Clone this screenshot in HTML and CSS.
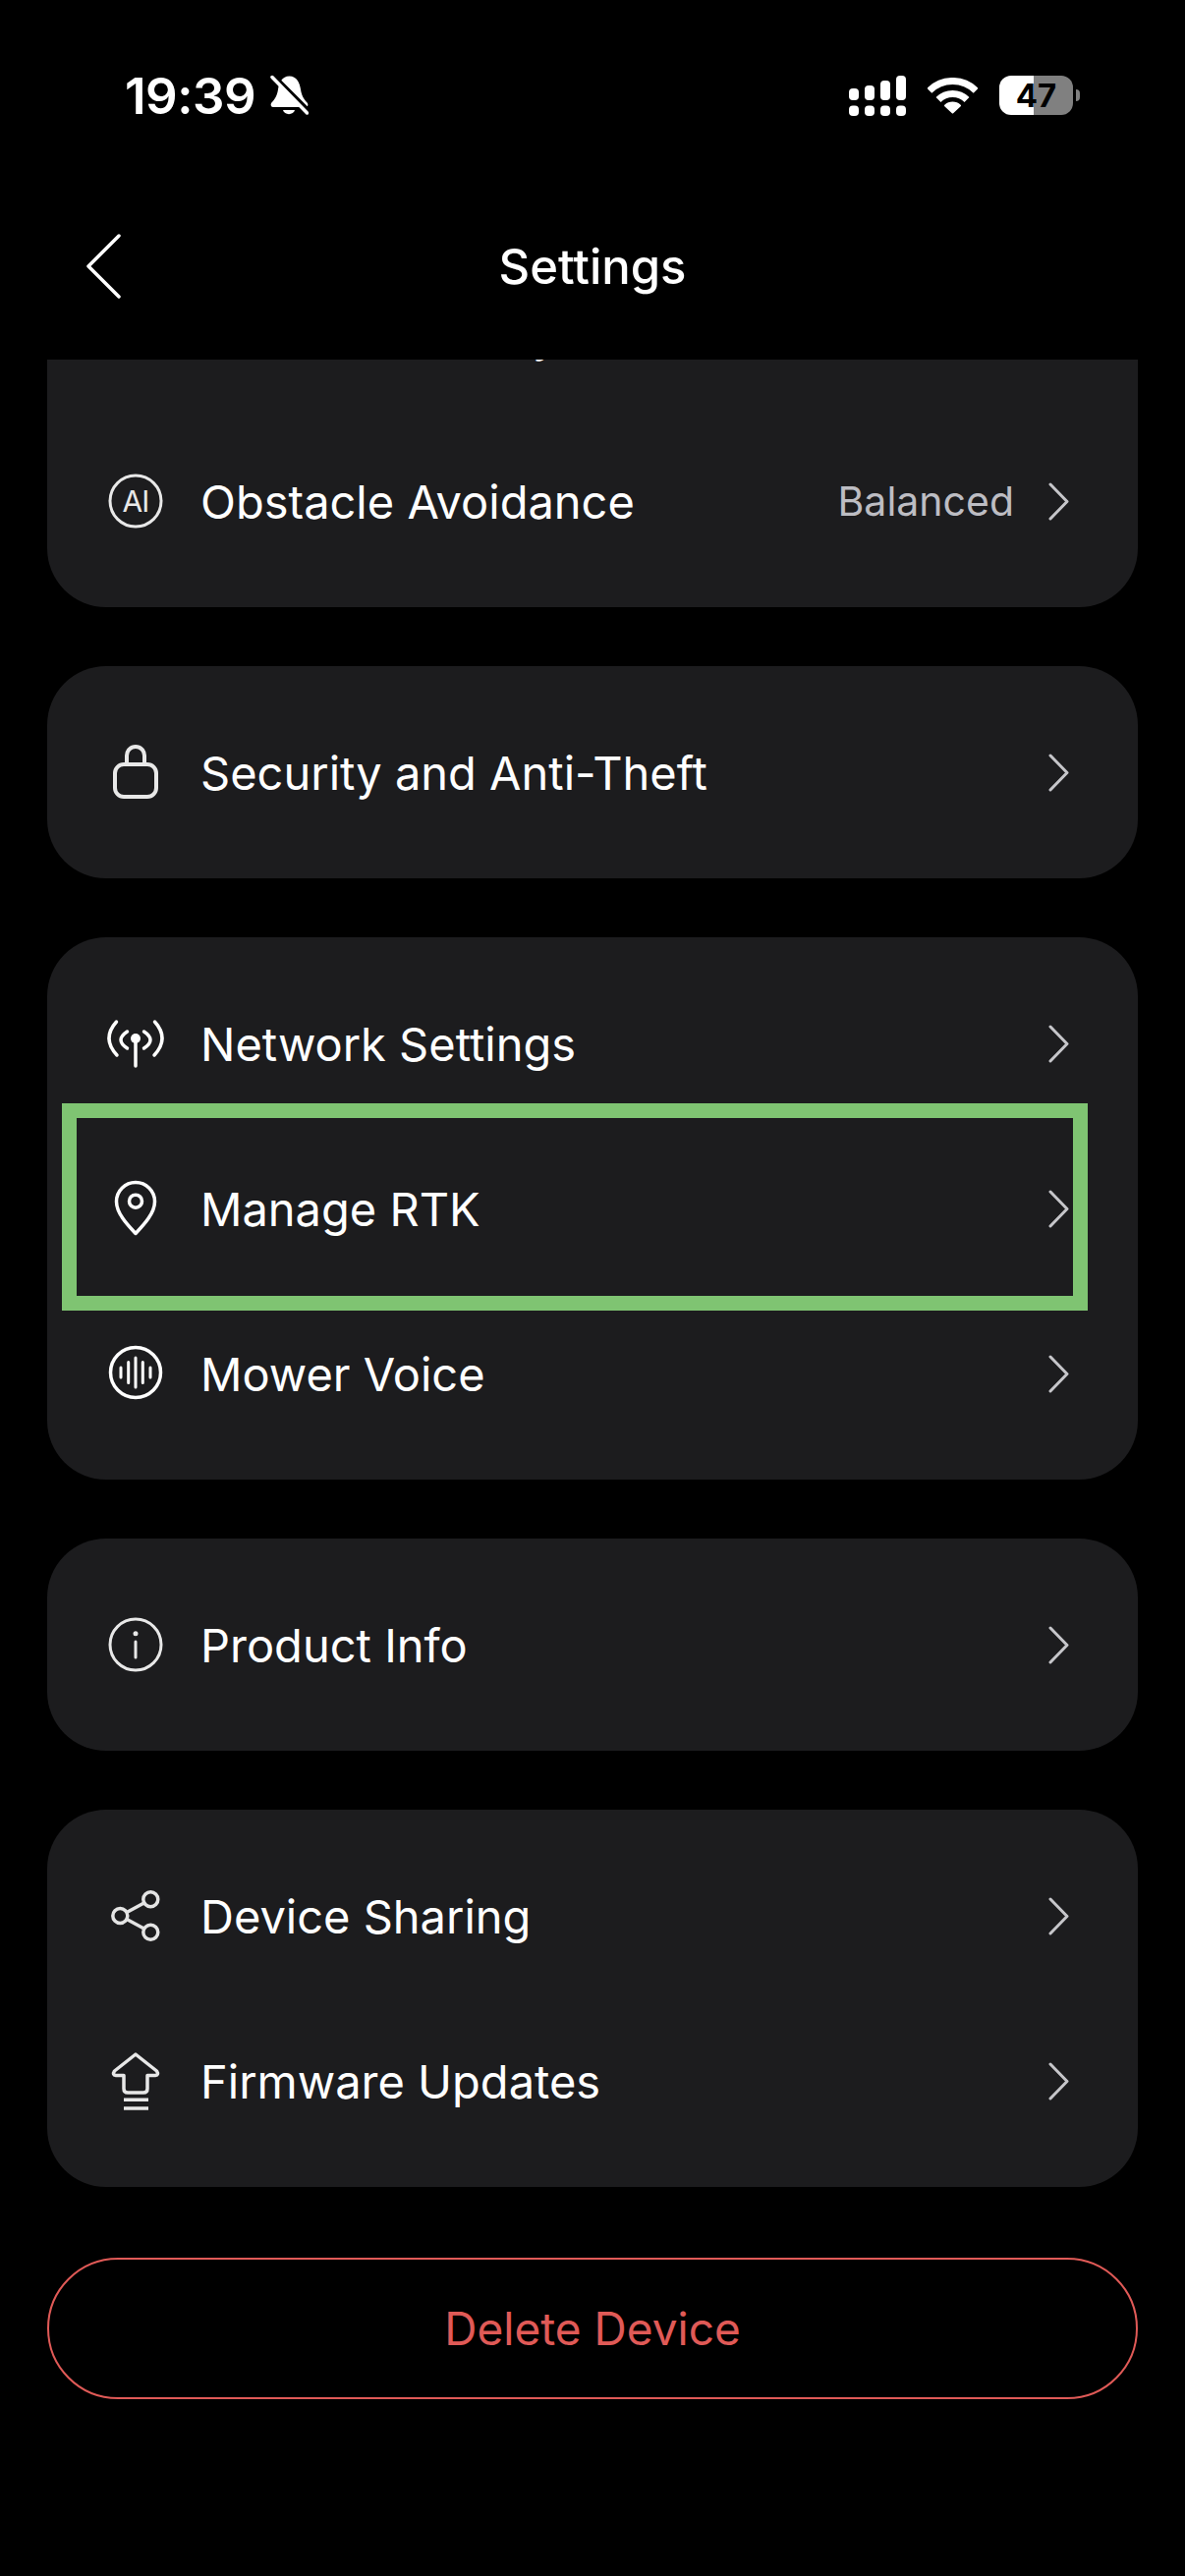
FILE: index.html
```html
<!DOCTYPE html>
<html lang="en">
<head>
    <meta charset="UTF-8">
    <meta name="viewport" content="width=device-width, initial-scale=1.0">
    <title>Settings</title>
    <link rel="stylesheet" href="styles.css">
</head>
<body>
    <!-- Status bar -->
    <div class="status-bar">
        <div class="status-left">
            <span class="time">19:39</span>
            <svg class="bell" width="39" height="43" viewBox="0 0 39 43">
                <path d="M19.5 1.5C27 1.5 30 8 31 15C32 22 35 26 38 29C39 31 38 33 36 33H3C1 33 0 31 1 29C4 26 7 22 8 15C9 8 12 1.500 19.500 1.500Z" fill="#fff"/>
                <path d="M13 36H25C24 41.500 14 41.500 13 36Z" fill="#fff"/>
                <path d="M-1 -3L39 37" stroke="#000" stroke-width="5" fill="none"/>
                <path d="M2 2.500L37.500 39" stroke="#fff" stroke-width="3.500" stroke-linecap="round" fill="none"/>
            </svg>
        </div>
        <div class="status-right">
            <svg width="58" height="41" viewBox="0 0 58 41" fill="#fff">
                <rect x="0" y="13" width="10" height="12" rx="4"/>
                <rect x="16" y="10" width="10" height="15" rx="4"/>
                <rect x="32" y="5" width="10" height="20" rx="4"/>
                <rect x="48" y="0" width="10" height="25" rx="4"/>
                <rect x="0" y="30.500" width="10" height="10.500" rx="4"/>
                <rect x="16" y="30.500" width="10" height="10.500" rx="4"/>
                <rect x="32" y="30.500" width="10" height="10.500" rx="4"/>
                <rect x="48" y="30.500" width="10" height="10.500" rx="4"/>
            </svg>
            <svg width="51" height="37" viewBox="0 0 51 37" fill="none" stroke="#fff">
                <path d="M1.800 13.300A33.500 33.500 0 0 1 49.200 13.300" stroke-width="7"/>
                <path d="M11 22.500A20.500 20.500 0 0 1 40 22.500" stroke-width="7"/>
                <path d="M25.500 35.500L18 28.500A11 11 0 0 1 33 28.500Z" fill="#fff" stroke-width="2" stroke-linejoin="round"/>
            </svg>
            <div class="battery">
                <span class="battery-level">47</span>
                <span class="battery-nub"></span>
            </div>
        </div>
    </div>

    <!-- Header -->
    <header class="top-bar">
        <svg class="back" width="35" height="66" viewBox="0 0 35 66" fill="none" stroke="#fff" stroke-width="3.500" stroke-linecap="round" stroke-linejoin="round">
            <path d="M33 2L2 33L33 64"/>
        </svg>
        <h1>Settings</h1>
    </header>

    <main class="settings">
        <section class="card card-scrolled">
            <!-- row scrolled away under the header, only the tail of its last letter shows -->
            <div class="row">
                <span class="row-icon"></span>
                <span class="row-label row-label-scrolled">y</span>
            </div>
            <div class="row">
                <svg class="row-icon" viewBox="0 0 60 60" fill="none" stroke="#e8e8e8" stroke-width="3">
                    <circle cx="30" cy="30" r="26"/>
                    <text x="30" y="41" class="ai-text" text-anchor="middle">AI</text>
                </svg>
                <span class="row-label">Obstacle Avoidance</span>
                <span class="row-value">Balanced</span>
                <svg class="chevron" viewBox="0 0 21 39"><path d="M2 2L19 19.500L2 37"/></svg>
            </div>
        </section>

        <section class="card">
            <div class="row">
                <svg class="row-icon" viewBox="0 0 60 60" fill="none" stroke="#e8e8e8" stroke-width="4">
                    <rect x="9" y="22" width="42" height="33" rx="9"/>
                    <path d="M21 21V13a9 9 0 0 1 18 0V21"/>
                </svg>
                <span class="row-label">Security and Anti-Theft</span>
                <svg class="chevron" viewBox="0 0 21 39"><path d="M2 2L19 19.500L2 37"/></svg>
            </div>
        </section>

        <section class="card card-highlighted">
            <div class="row">
                <svg class="row-icon" viewBox="0 0 60 60" fill="none" stroke="#fff" stroke-width="3.500" stroke-linecap="round">
                    <path d="M10.500 8Q-4.800 25 11 42"/>
                    <path d="M21.500 18Q8.500 26.500 21.500 35"/>
                    <path d="M49.500 8Q64.800 25 49 42"/>
                    <path d="M38.500 18Q51.500 26.500 38.500 35"/>
                    <circle cx="30" cy="25" r="5" fill="#fff" stroke="none"/>
                    <path d="M30 26V53"/>
                </svg>
                <span class="row-label">Network Settings</span>
                <svg class="chevron" viewBox="0 0 21 39"><path d="M2 2L19 19.500L2 37"/></svg>
            </div>
            <div class="row">
                <svg class="row-icon" viewBox="0 0 60 60" fill="none" stroke="#fff" stroke-width="3.500" stroke-linejoin="round">
                    <path d="M30 55.500C24 49 10.500 36 10.500 23A19.500 19.500 0 0 1 49.500 23C49.500 36 36 49 30 55.500Z"/>
                    <circle cx="30" cy="22.700" r="6.500"/>
                </svg>
                <span class="row-label">Manage RTK</span>
                <svg class="chevron" viewBox="0 0 21 39"><path d="M2 2L19 19.500L2 37"/></svg>
            </div>
            <div class="row">
                <svg class="row-icon" viewBox="0 0 60 60" fill="none" stroke="#fff" stroke-width="3.500" stroke-linecap="round">
                    <circle cx="30" cy="29" r="25.500"/>
                    <path d="M15 24V34M22.700 18.500V39.500M30 14V44M37.300 18.500V39.500M45 24V34" stroke-width="3"/>
                </svg>
                <span class="row-label">Mower Voice</span>
                <svg class="chevron" viewBox="0 0 21 39"><path d="M2 2L19 19.500L2 37"/></svg>
            </div>
            <div class="highlight"></div>
        </section>

        <section class="card">
            <div class="row">
                <svg class="row-icon" viewBox="0 0 60 60" fill="none" stroke="#e8e8e8" stroke-width="3" stroke-linecap="round">
                    <circle cx="30" cy="30" r="26"/>
                    <circle cx="30" cy="18.700" r="2.500" fill="#e8e8e8" stroke="none"/>
                    <path d="M30 27V43"/>
                </svg>
                <span class="row-label">Product Info</span>
                <svg class="chevron" viewBox="0 0 21 39"><path d="M2 2L19 19.500L2 37"/></svg>
            </div>
        </section>

        <section class="card">
            <div class="row">
                <svg class="row-icon" viewBox="0 0 60 60" fill="none" stroke="#e4e4e4" stroke-width="3.500">
                    <circle cx="45.300" cy="13.300" r="7.500"/>
                    <circle cx="14.300" cy="30" r="7.500"/>
                    <circle cx="45.300" cy="46.700" r="7.500"/>
                    <path d="M21 26.500L38.500 17M21 33.500L38.500 43"/>
                </svg>
                <span class="row-label">Device Sharing</span>
                <svg class="chevron" viewBox="0 0 21 39"><path d="M2 2L19 19.500L2 37"/></svg>
            </div>
            <div class="row">
                <svg class="row-icon" viewBox="0 0 60 60" fill="none" stroke="#e8e8e8" stroke-width="3.500" stroke-linejoin="round">
                    <path d="M30 3L8.500 20Q6 24 10 24.500H18V38Q18 42 22 42H38Q42 42 42 38V24.500H50Q54 24 51.500 20Z"/>
                    <path d="M18 49.300H43M18 58H43"/>
                </svg>
                <span class="row-label">Firmware Updates</span>
                <svg class="chevron" viewBox="0 0 21 39"><path d="M2 2L19 19.500L2 37"/></svg>
            </div>
        </section>

        <button class="delete-btn" type="button">Delete Device</button>
    </main>
</body>
</html>
```

FILE: styles.css
```css
* {
    box-sizing: border-box;
}
html, body {
    margin: 0;
    height: 100%;
}
body {
    background: #000;
    color: #fff;
    font-family: Inter, "Noto Sans", sans-serif;
    display: flex;
    flex-direction: column;
    height: 2622px;
    overflow: hidden;
}

/* status bar */
.status-bar {
    height: 176px;
    padding: 18px 114px 0 127px;
    display: flex;
    justify-content: space-between;
    align-items: center;
    flex-shrink: 0;
}
.status-left {
    display: flex;
    align-items: center;
    gap: 15px;
}
.time {
    font-size: 51px;
    font-weight: 600;
    letter-spacing: -0.5px;
    line-height: 1;
}
.status-right {
    display: flex;
    align-items: center;
    gap: 22px;
}
.battery {
    position: relative;
    width: 75px;
    height: 40px;
    border-radius: 12px;
    background: linear-gradient(to right, #fff 0, #fff 35px, #808080 35px, #808080 100%);
    display: flex;
    align-items: center;
    justify-content: center;
}
.battery-level {
    color: #000;
    font-size: 33px;
    font-weight: 700;
    line-height: 1;
}
.battery-nub {
    position: absolute;
    right: -7px;
    top: 14px;
    width: 4px;
    height: 12px;
    border-radius: 0 4px 4px 0;
    background: #808080;
}

/* header */
.top-bar {
    height: 190px;
    flex-shrink: 0;
    padding-left: 88px;
    display: grid;
    grid-template-columns: 1fr auto 1fr;
    padding-right: 88px;
    align-items: center;
}
.top-bar h1 {
    margin: 0;
    font-size: 49px;
    font-weight: 500;
    line-height: 1;
}
.back {
    display: block;
}

/* list */
.settings {
    flex: 1;
    min-height: 0;
    overflow: hidden;
    padding: 0 48px;
    display: flex;
    flex-direction: column;
    gap: 60px;
}
.card {
    position: relative;
    flex-shrink: 0;
    background: #1c1c1e;
    border-radius: 60px;
    padding: 24px 0;
}
.card-scrolled {
    margin-top: -132px;
}
.row {
    height: 168px;
    padding: 0 70px 0 60px;
    display: flex;
    align-items: center;
}
.row-icon {
    width: 60px;
    height: 60px;
    flex-shrink: 0;
    overflow: visible;
}
.row-label {
    margin-left: 36px;
    flex: 1;
    font-size: 47px;
    font-weight: 400;
    white-space: nowrap;
}
.row-label-scrolled {
    padding-left: 338px;
    margin-bottom: 4px;
}
.row-value {
    margin-right: 35px;
    font-size: 41px;
    color: #bdbdc3;
}
.chevron {
    width: 21px;
    height: 39px;
    flex-shrink: 0;
    fill: none;
    stroke: #c6c6ca;
    stroke-width: 3;
    stroke-linecap: round;
    stroke-linejoin: round;
}
.ai-text {
    font-family: Inter, sans-serif;
    font-size: 30px;
    font-weight: 400;
    letter-spacing: -1px;
    fill: #e8e8e8;
    stroke: none;
}

/* green marker round Manage RTK */
.highlight {
    position: absolute;
    left: 15px;
    top: 169px;
    width: 1044px;
    height: 211px;
    border: 15px solid #7fc472;
}

.delete-btn {
    flex-shrink: 0;
    margin-top: 12px;
    height: 144px;
    border: 2px solid #e05a57;
    border-radius: 72px;
    background: transparent;
    color: #e05a57;
    font-family: inherit;
    font-size: 46px;
}
```
